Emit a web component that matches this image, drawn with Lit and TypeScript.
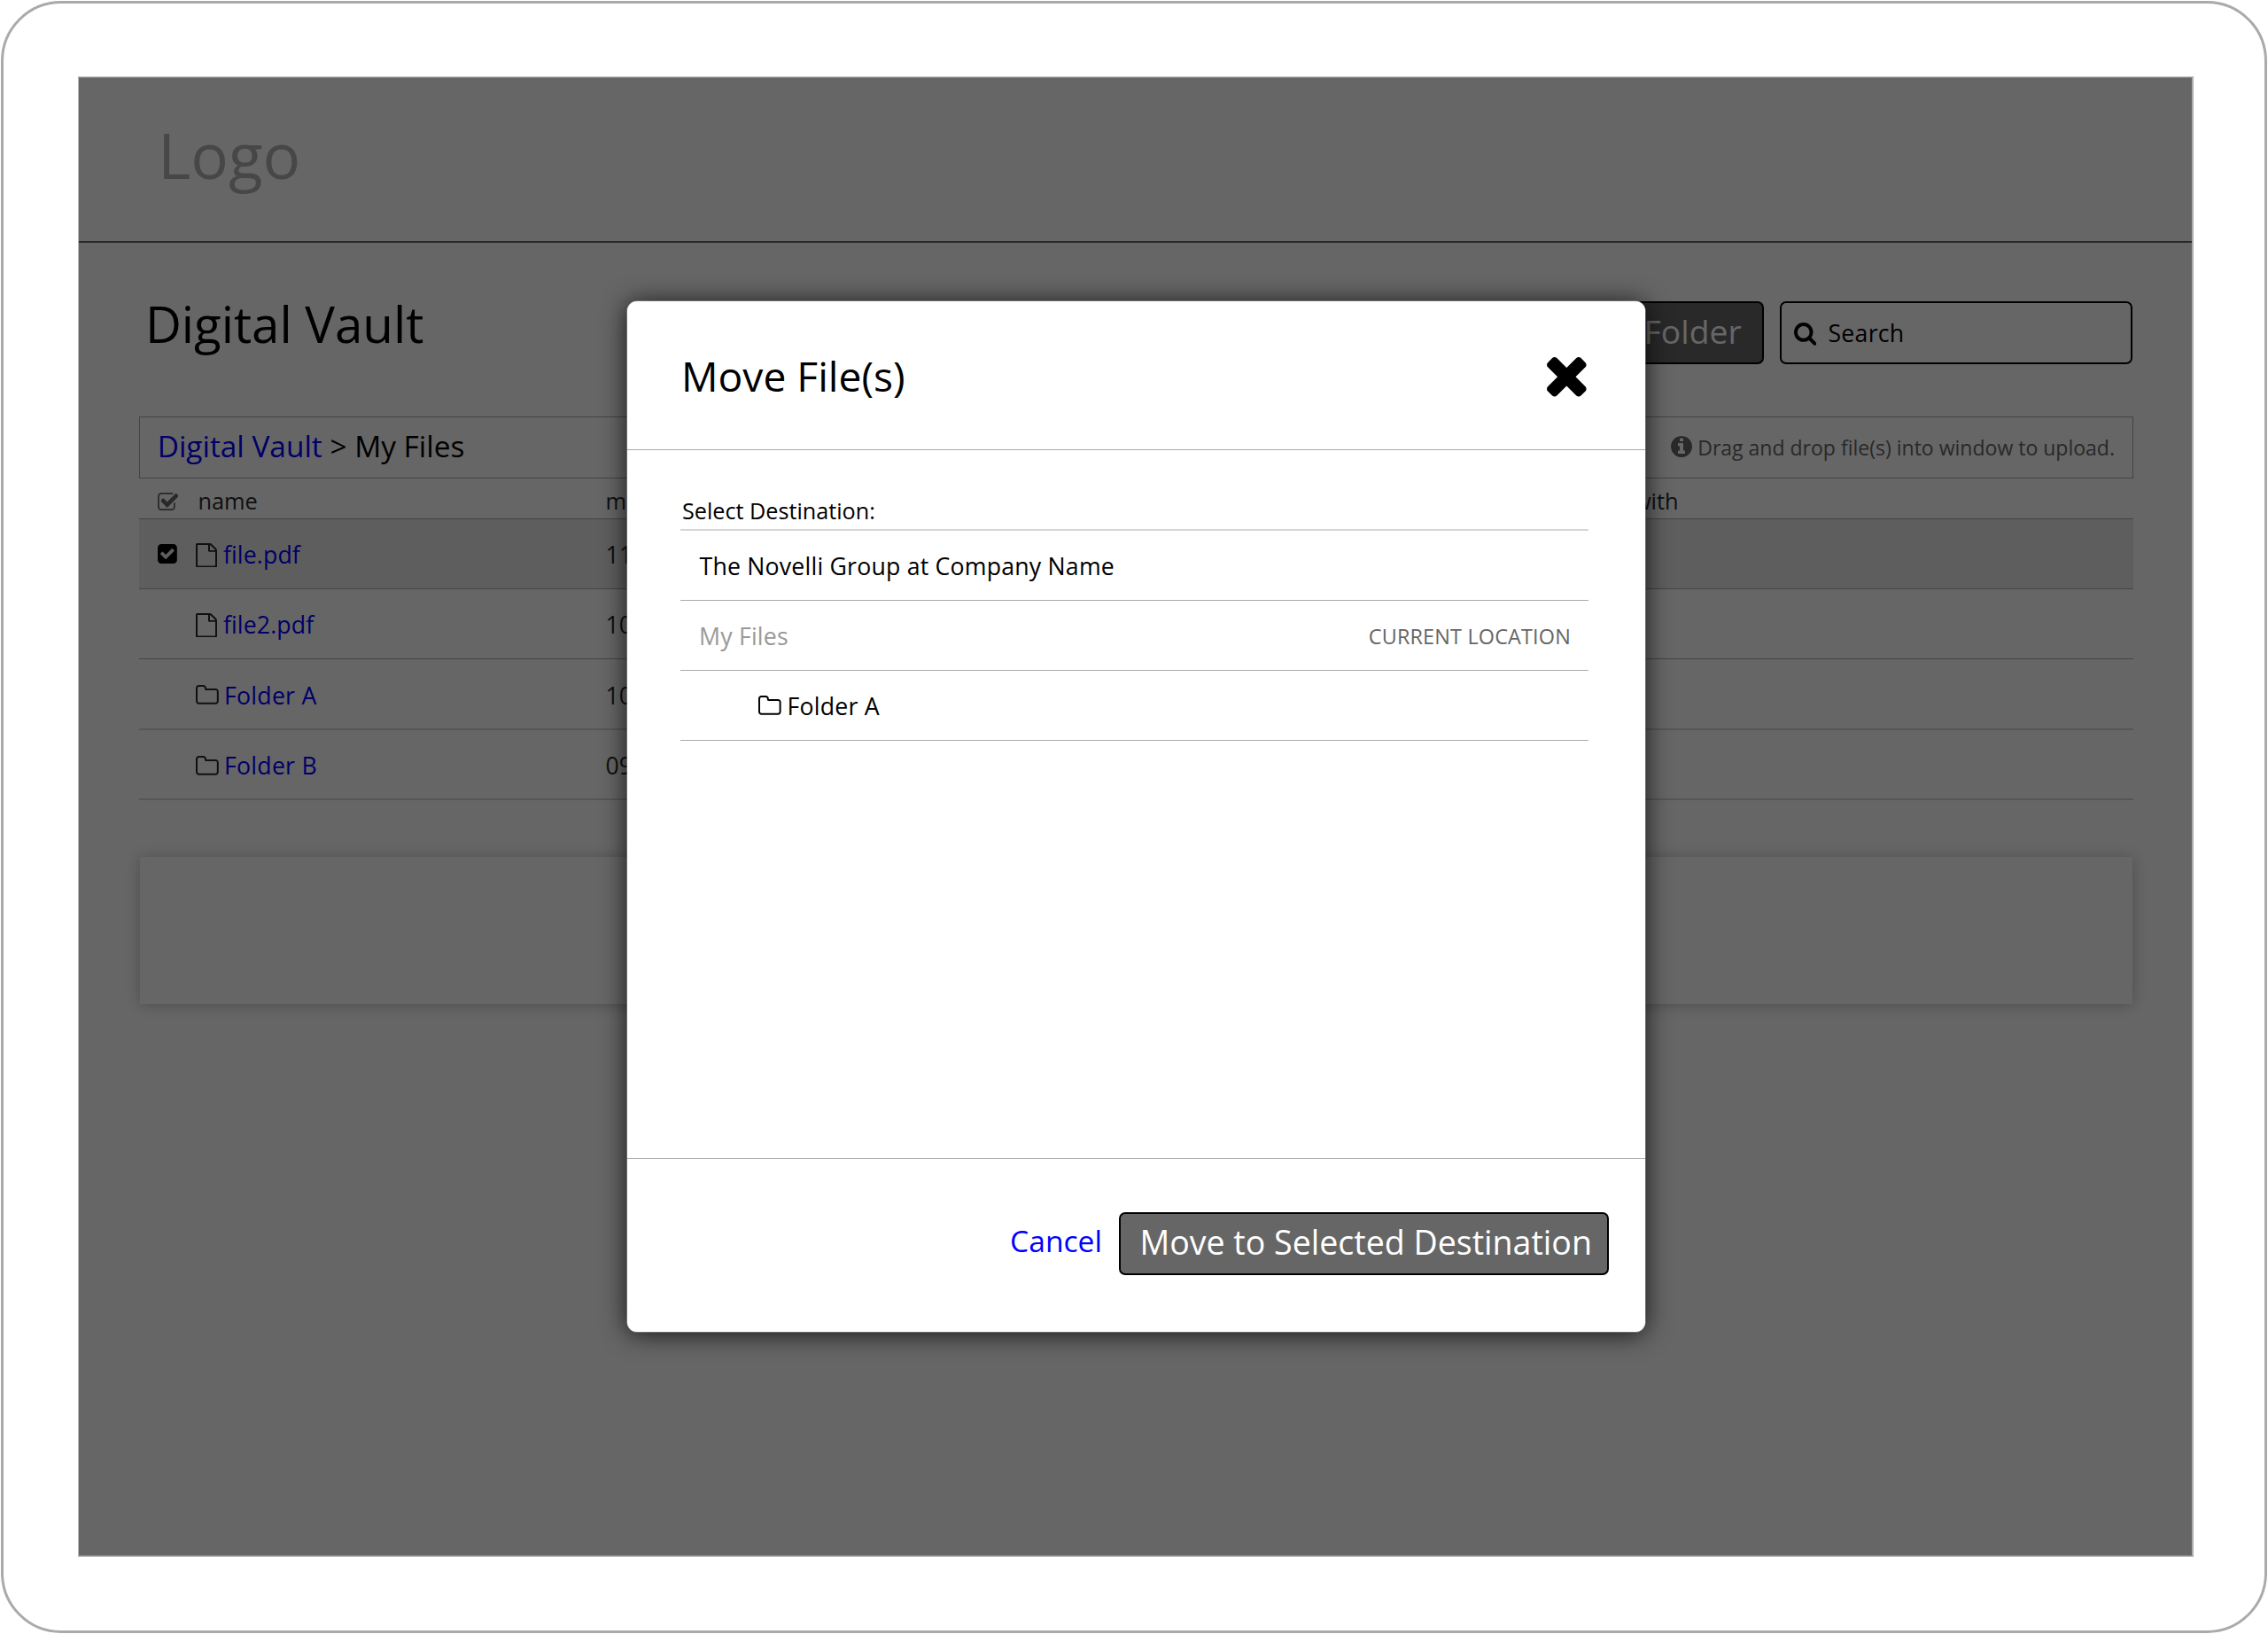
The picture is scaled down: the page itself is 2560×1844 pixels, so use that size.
import { LitElement, html, css, nothing } from "lit";
import { customElement, property } from "lit/decorators.js";
import { classMap } from "lit/directives/class-map.js";

const ICONS: Record<string, { box: string; d: string }> = {
  times: {
    box: "302 366 1188 1188",
    d: "M1490 1322q0 40-28 68l-136 136q-28 28-68 28t-68-28l-294-294-294 294q-28 28-68 28t-68-28l-136-136q-28-28-28-68t28-68l294-294-294-294q-28-28-28-68t28-68l136-136q28-28 68-28t68 28l294 294 294-294q28-28 68-28t68 28l136 136q28 28 28 68t-28 68l-294 294 294 294q28 28 28 68z",
  },
  info: {
    box: "128 128 1536 1536",
    d: "M1152 1376v-160q0-14-9-23t-23-9h-96v-512q0-14-9-23t-23-9h-320q-14 0-23 9t-9 23v160q0 14 9 23t23 9h96v320h-96q-14 0-23 9t-9 23v160q0 14 9 23t23 9h448q14 0 23-9t9-23zm-128-896v-160q0-14-9-23t-23-9h-192q-14 0-23 9t-9 23v160q0 14 9 23t23 9h192q14 0 23-9t9-23zm640 416q0 209-103 385.5t-279.5 279.5-385.5 103-385.5-103-279.5-279.5-103-385.5 103-385.5 279.5-279.5 385.5-103 385.5 103 279.5 279.5 103 385.5z",
  },
  search: {
    box: "64 128 1664 1664",
    d: "M1216 832q0-185-131.5-316.5t-316.5-131.5-316.5 131.5-131.5 316.5 131.5 316.5 316.5 131.5 316.5-131.5 131.5-316.5zm512 832q0 52-38 90t-90 38q-54 0-90-38l-343-342q-179 124-399 124-143 0-273.5-55.5t-225-150-150-225-55.5-273.5 55.5-273.5 150-225 225-150 273.5-55.5 273.5 55.5 225 150 150 225 55.5 273.5q0 220-124 399l343 343q37 37 37 90z",
  },
  checked: {
    box: "128 128 1536 1536",
    d: "M813 1299l614-614q19-19 19-45t-19-45l-102-102q-19-19-45-19t-45 19l-467 467-211-211q-19-19-45-19t-45 19l-102 102q-19 19-19 45t19 45l358 358q19 19 45 19t45-19zm851-883v960q0 119-84.5 203.5t-203.5 84.5h-960q-119 0-203.5-84.5t-84.5-203.5v-960q0-119 84.5-203.5t203.5-84.5h960q119 0 203.5 84.5t84.5 203.5z",
  },
  checkOutline: {
    box: "64 128 1664 1408",
    d: "M1472 930v318q0 119-84.5 203.5t-203.5 84.5h-832q-119 0-203.5-84.5t-84.5-203.5v-832q0-119 84.5-203.5t203.5-84.5h832q63 0 117 25 15 7 18 23 3 17-9 29l-49 49q-10 10-23 10-3 0-9-2-23-6-45-6h-832q-66 0-113 47t-47 113v832q0 66 47 113t113 47h832q66 0 113-47t47-113v-254q0-13 9-22l64-64q10-10 23-10 6 0 12 3 20 8 20 29zm231-489l-814 814q-24 24-57 24t-57-24l-430-430q-24-24-24-57t24-57l110-110q24-24 57-24t57 24l263 263 647-647q24-24 57-24t57 24l110 110q24 24 24 57t-24 57z",
  },
  file: {
    box: "128 0 1536 1792",
    d: "M1596 380q28 28 48 76t20 88v1152q0 40-28 68t-68 28h-1344q-40 0-68-28t-28-68v-1600q0-40 28-68t68-28h896q40 0 88 20t76 48zm-444-244v376h376q-10-29-22-41l-313-313q-12-12-41-22zm384 1528v-1024h-416q-40 0-68-28t-28-68v-416h-768v1536h1280z",
  },
  folder: {
    box: "64 128 1664 1408",
    d: "M1600 1312v-704q0-40-28-68t-68-28h-704q-40 0-68-28t-28-68v-64q0-40-28-68t-68-28h-320q-40 0-68 28t-28 68v960q0 40 28 68t68 28h1216q40 0 68-28t28-68zm128-704v704q0 92-66 158t-158 66h-1216q-92 0-158-66t-66-158v-960q0-92 66-158t158-66h320q92 0 158 66t66 158v32h672q92 0 158 66t66 158z",
  },
};

@customElement("vault-icon")
class VaultIcon extends LitElement {
  @property() name = "file";
  static styles = css`
    :host { display: block; flex: none; }
    .glyph { display: block; width: 100%; height: 100%; fill: currentColor; }
  `;
  render() {
    const icon = ICONS[this.name];
    return html`<svg class="glyph" viewBox=${icon.box} preserveAspectRatio="none"><path d=${icon.d}></path></svg>`;
  }
}

@customElement("move-dialog")
class MoveDialog extends LitElement {
  static styles = css`
    :host {
      display: flex; flex-direction: column; box-sizing: border-box;
      width: 1149px; height: 1163px; background: #fff; color: #000; border-radius: 11px;
      box-shadow: 0 0 0 0.5px #999, 0 2px 29px rgba(0, 0, 0, 0.8);
    }
    .head {
      display: flex; justify-content: space-between; box-sizing: border-box; height: 168px;
      padding: 0 66px 0 61px; border-bottom: 1px solid #aaa;
    }
    .title { margin: 0; font-size: 46.2px; font-weight: 400; line-height: 169.4px; }
    .close { width: 44.6px; height: 44.6px; margin-top: 63px; }
    .body { flex: 1; padding: 40px 64px 0 60px; }
    .label { height: 49px; padding-left: 2px; font-size: 25.2px; line-height: 57.8px; }
    .list { border-top: 2px solid #d6d6d6; }
    .item {
      display: flex; box-sizing: border-box; height: 79px; padding: 0 20px 0 21.5px;
      border-bottom: 1px solid #aaa; font-size: 26.7px; letter-spacing: 0.2px; line-height: 80.5px;
    }
    .current { color: #999; padding-left: 21px; }
    .nested { padding-left: 88.2px; }
    .folder { width: 25.6px; height: 21.7px; margin: 28.3px 6.8px 0 0; }
    .tag { margin-left: auto; color: #666; font-size: 23.4px; letter-spacing: 0.18px; line-height: 81.3px; }
    .foot {
      display: flex; justify-content: flex-end; box-sizing: border-box; height: 196px;
      padding: 60px 41.3px 0 0; border-top: 1px solid #aaa;
    }
    .cancel { margin-right: 19.3px; color: #00f; font-size: 33.6px; line-height: 65.4px; text-decoration: none; }
    .move {
      box-sizing: border-box; width: 552.5px; height: 71px; padding: 0 0 0 21.2px; border: 2px solid #000;
      border-radius: 7px; background: #666; color: #fff; font-size: 37.55px;
      line-height: 63px; white-space: nowrap;
    }
  `;
  render() {
    return html`
      <header class="head"><h2 class="title">Move File(s)</h2><vault-icon class="close" name="times"></vault-icon></header>
      <section class="body">
        <div class="label">Select Destination:</div>
        <div class="list">
          <div class="item">The Novelli Group at Company Name</div>
          <div class="item current">My Files<span class="tag">CURRENT LOCATION</span></div>
          <div class="item nested"><vault-icon class="folder" name="folder"></vault-icon>Folder A</div>
        </div>
      </section>
      <footer class="foot">
        <a class="cancel">Cancel</a>
        <div class="move" role="button">Move to Selected Destination</div>
      </footer>
    `;
  }
}

interface Entry { name: string; kind: "file" | "folder"; modified: string; selected?: boolean; }

const ENTRIES: Entry[] = [
  { name: "file.pdf", kind: "file", modified: "11", selected: true },
  { name: "file2.pdf", kind: "file", modified: "10" },
  { name: "Folder A", kind: "folder", modified: "10" },
  { name: "Folder B", kind: "folder", modified: "09" },
];

@customElement("app-root")
class AppRoot extends LitElement {
  static styles = css`
    :host {
      display: block; box-sizing: border-box; width: 2560px; height: 1844px; padding: 1px; background: #fff;
      color: #000; font-family: "Open Sans", "Noto Sans", sans-serif; overflow: hidden;
    }
    .device {
      box-sizing: border-box; width: 2558px; height: 1842px; padding: 82px 0 0 84px;
      border: 3px solid #aaa; border-radius: 68px;
    }
    .screen {
      position: relative; box-sizing: border-box; width: 2388px; height: 1671px;
      border: 1px solid #b8b8b8; border-top-color: #ccc; border-right: 2px solid #aeaeae;
      background: #fff; overflow: hidden;
    }
    .brand {
      height: 185px; padding-left: 89.2px; border-bottom: 2px solid #666;
      color: #b2b2b2; font-size: 71px; line-height: 176px;
    }
    .main { padding: 66px 66px 0 68px; }
    .toolbar { display: flex; height: 71px; padding-right: 1px; }
    .heading { margin: 0 auto 0 6.9px; font-size: 56.45px; font-weight: 400; line-height: 52.2px; }
    .create {
      box-sizing: border-box; height: 71px; margin-right: 18.3px; padding: 0 23px; border: 2px solid #000;
      border-radius: 7px; background: #666; color: #fff; font-size: 37.3px; line-height: 63px;
    }
    .search {
      display: flex; box-sizing: border-box; width: 398px; height: 71px; padding-left: 13.7px;
      border: 2px solid #000; border-radius: 7px; font-size: 26.7px; letter-spacing: 0.25px; line-height: 68.7px;
    }
    .search-icon { width: 25.4px; height: 25.8px; margin: 22.2px 13.4px 0 0; }
    .path {
      display: flex; justify-content: space-between; box-sizing: border-box; height: 70px; margin-top: 59px;
      padding: 0 20px 0 19.7px; border: 1px solid #aaa; font-size: 33.4px; line-height: 65.4px;
    }
    .link { color: #00f; text-decoration: none; }
    .hint { display: flex; color: #666; font-size: 23.02px; line-height: 68.2px; }
    .hint-icon { width: 24px; height: 24px; margin: 21px 6.3px 0 0; }
    .row {
      display: grid; grid-template-columns: 64px 462.4px 1072px 1fr; box-sizing: border-box; height: 79px;
      border-bottom: 1px solid #aaa; color: #2a2a2a; font-size: 26.7px; line-height: 80.5px;
    }
    .columns { height: 46px; font-size: 25.4px; line-height: 51px; }
    .column-name { padding-left: 2.4px; }
    .select-all { width: 23.3px; height: 20.2px; margin: 15.8px 0 0 20.7px; color: #666; }
    .selected { background: #ebebeb; }
    .box { width: 21.8px; height: 22px; margin: 28px 0 0 21px; color: #000; }
    .entry { display: flex; letter-spacing: 0.12px; }
    .file { width: 24px; height: 27.6px; margin: 26.5px 6.9px 0 0; }
    .folder { width: 25.8px; height: 21.7px; margin: 29px 6.2px 0 0; }
    .spaced { letter-spacing: 0.25px; }
    .row:nth-last-child(2) { height: 80px; line-height: 81.5px; }
    .row:nth-last-child(-n + 2) { border-bottom: 2px solid #d6d6d6; }
    .panel { height: 166px; margin: 64px 1px 0; background: #fff; box-shadow: 0 1px 16px rgba(0, 0, 0, 0.25); }
    .overlay {
      position: absolute; inset: 0; display: flex; align-items: flex-start;
      padding: 253px 0 0 619px; background: rgba(0, 0, 0, 0.6); box-shadow: inset 0 1px 0 0 #888, inset 0 -1px 0 0 #888;
    }
  `;

  private entryRow(entry: Entry) {
    return html`
      <div class=${classMap({ row: true, selected: !!entry.selected })}>
        <div>${entry.selected ? html`<vault-icon class="box" name="checked"></vault-icon>` : nothing}</div>
        <div class=${classMap({ entry: true, spaced: entry.kind === "folder" })}>
          <vault-icon class=${entry.kind} name=${entry.kind}></vault-icon><a class="link">${entry.name}</a>
        </div>
        <div>${entry.modified}</div>
      </div>
    `;
  }

  render() {
    return html`
      <div class="device">
        <div class="screen">
          <header class="brand">Logo</header>
          <main class="main">
            <div class="toolbar">
              <h1 class="heading">Digital Vault</h1>
              <div class="create" role="button">New Folder</div>
              <div class="search"><vault-icon class="search-icon" name="search"></vault-icon>Search</div>
            </div>
            <nav class="path">
              <div><a class="link">Digital Vault</a> &gt; My Files</div>
              <div class="hint"><vault-icon class="hint-icon" name="info"></vault-icon>Drag and drop file(s) into window to upload.</div>
            </nav>
            <div>
              <div class="row columns">
                <div><vault-icon class="select-all" name="checkOutline"></vault-icon></div>
                <div class="column-name">name</div>
                <div>m</div>
                <div>shared with</div>
              </div>
              ${ENTRIES.map((entry) => this.entryRow(entry))}
            </div>
            <div class="panel"></div>
          </main>
          <div class="overlay"><move-dialog></move-dialog></div>
        </div>
      </div>
    `;
  }
}
